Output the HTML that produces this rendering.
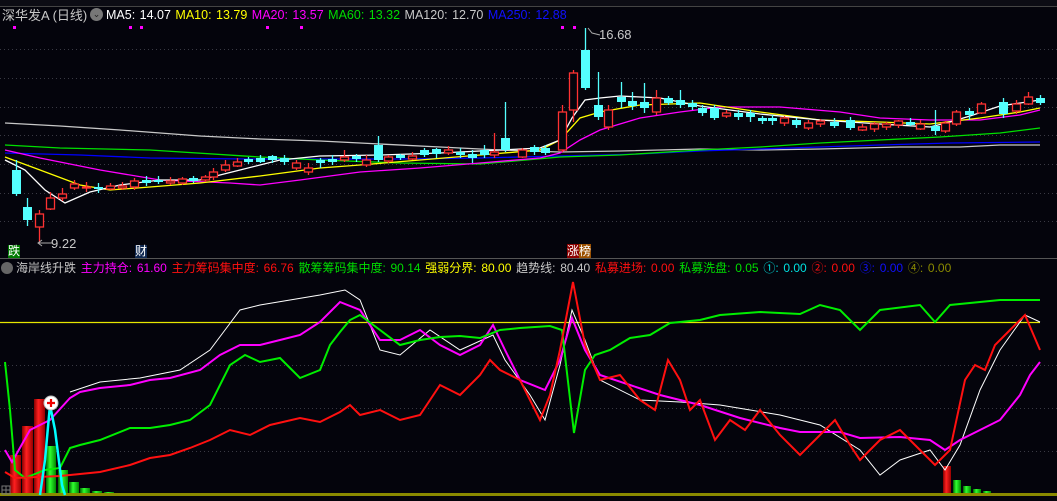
<!DOCTYPE html>
<html><head><meta charset="utf-8"><style>
html,body{margin:0;padding:0;background:#04040c;width:1057px;height:501px;overflow:hidden}
.t{position:absolute;font-family:"Liberation Sans","Noto Sans CJK SC",sans-serif;font-size:13px;white-space:nowrap;line-height:15px}
</style></head><body>
<svg width="1057" height="501" style="position:absolute;left:0;top:0" xmlns="http://www.w3.org/2000/svg">
<rect width="1057" height="501" fill="#04040c"/>
<rect x="0" y="0" width="1057" height="6" fill="#0c0c14"/>
<line x1="0" y1="6.5" x2="1057" y2="6.5" stroke="#444" />
<g stroke="#3a3a44" stroke-dasharray="1 3">
<line x1="0" y1="49.5" x2="1057" y2="49.5"/><line x1="0" y1="78.5" x2="1057" y2="78.5"/>
<line x1="0" y1="107.5" x2="1057" y2="107.5"/><line x1="0" y1="135.5" x2="1057" y2="135.5"/>
<line x1="0" y1="164.5" x2="1057" y2="164.5"/><line x1="0" y1="193.5" x2="1057" y2="193.5"/>
<line x1="0" y1="221.5" x2="1057" y2="221.5"/>
<line x1="0" y1="365.5" x2="1057" y2="365.5"/><line x1="0" y1="408.5" x2="1057" y2="408.5"/>
<line x1="0" y1="451.5" x2="1057" y2="451.5"/>
</g>
<line x1="0" y1="258.5" x2="1057" y2="258.5" stroke="#555"/>
<g fill="none" stroke-width="1.3">
<polyline stroke="#c8c8c8" points="5,123 60,126 120,130 200,136 260,139 320,141 380,144 440,147 500,150 560,152 620,151 700,149 760,150 820,149 900,147 960,147 1000,145 1040,145"/>
<polyline stroke="#0000ff" points="5,153 80,155 150,158 250,159 400,159 480,158 560,156 640,154 700,151 760,149 820,147 880,145 950,143 1040,142"/>
<polyline stroke="#00e000" points="5,145 60,148 150,150 260,157 320,160 400,163 480,164 560,157 620,155 700,150 760,147 820,143 880,140 940,137 1000,133 1040,128"/>
<polyline stroke="#ff00ff" points="5,150 40,158 100,170 160,180 230,183 260,185 300,180 360,172 420,168 480,163 540,158 560,153 580,140 600,130 640,118 680,112 720,107 780,107 840,112 880,118 930,120 980,120 1020,115 1040,110"/>
<polyline stroke="#ffff00" points="5,157 40,170 80,185 110,190 150,187 200,183 260,176 320,168 360,165 420,160 480,155 540,150 560,140 580,118 600,112 640,105 700,103 760,112 820,120 880,122 930,124 980,118 1020,112 1040,108"/>
<polyline stroke="#ffffff" points="5,160 25,170 45,190 65,203 90,192 120,185 160,180 200,180 240,170 280,160 320,156 380,155 440,153 500,150 540,148 560,140 572,118 585,100 600,98 620,96 660,98 700,106 760,114 820,120 880,124 930,127 950,122 970,116 1000,106 1040,100"/>
</g>
<g id="candles" stroke-width="1.3"></g>
<polyline points="588,28 592,33 600,35" fill="none" stroke="#aaa"/>
<line x1="38" y1="243" x2="52" y2="243" stroke="#aaa"/>
<polyline points="42,240 38,243 42,246" fill="none" stroke="#aaa"/>
<g fill="#ff00ff"><rect x="13" y="26" width="3" height="3"/><rect x="129" y="26" width="3" height="3"/><rect x="140" y="26" width="3" height="3"/><rect x="266" y="26" width="3" height="3"/><rect x="300" y="26" width="3" height="3"/>
<rect x="561" y="26" width="3" height="3"/><rect x="573" y="26" width="3" height="3"/></g>
<line x1="0" y1="322.5" x2="1040" y2="322.5" stroke="#e6e600" stroke-width="1.2"/>
<defs>
<linearGradient id="rg" x1="0" x2="1"><stop offset="0" stop-color="#800"/><stop offset=".4" stop-color="#ff2020"/><stop offset="1" stop-color="#900"/></linearGradient>
<linearGradient id="gg" x1="0" x2="1"><stop offset="0" stop-color="#060"/><stop offset=".4" stop-color="#30ff30"/><stop offset="1" stop-color="#080"/></linearGradient>
</defs>
<g fill="url(#rg)"><rect x="10" y="455" width="11" height="40"/><rect x="22" y="426" width="11" height="69"/><rect x="34" y="399" width="11" height="96"/><rect x="943" y="466" width="8" height="29"/></g>
<g fill="url(#gg)"><rect x="46" y="446" width="10" height="49"/><rect x="58" y="470" width="10" height="25"/><rect x="69" y="482" width="10" height="13"/><rect x="80" y="488" width="10" height="7"/><rect x="92" y="491" width="10" height="4"/><rect x="104" y="492" width="10" height="3"/><rect x="953" y="480" width="8" height="15"/><rect x="963" y="486" width="8" height="9"/><rect x="973" y="489" width="8" height="6"/><rect x="983" y="491" width="8" height="4"/></g>
<rect x="0" y="493" width="1057" height="3" fill="#8a8a00"/>
<g fill="none" stroke-width="2">
<polyline stroke="#ffffff" stroke-width="1" points="70,392 100,382 140,378 180,370 210,350 225,330 240,310 260,305 290,300 320,295 345,290 360,300 380,350 400,355 430,330 460,350 493,335 505,360 530,395 545,420 560,365 572,310 585,340 600,380 640,400 680,402 720,405 780,415 820,425 860,450 880,475 900,460 930,450 945,470 960,445 980,390 1000,350 1025,315 1040,322"/>
<polyline stroke="#ff00ff" points="5,450 12,462 30,430 50,420 70,398 80,392 100,388 130,385 150,380 170,378 200,370 220,355 240,345 260,345 280,340 300,335 320,322 340,302 360,310 380,340 400,340 420,330 440,345 460,355 480,345 493,325 505,350 520,380 545,390 560,360 572,318 585,350 600,375 630,385 660,395 700,405 740,418 780,428 800,432 840,432 860,438 900,437 930,440 945,450 960,440 980,430 1000,420 1020,395 1030,375 1040,362"/>
<polyline stroke="#00ee00" points="5,362 10,410 15,470 25,478 45,470 60,468 70,448 80,445 100,440 130,428 150,428 170,425 190,420 210,405 230,365 245,355 260,362 280,358 300,378 320,370 330,345 340,332 350,320 360,315 380,330 400,345 420,340 440,337 460,336 480,338 500,330 520,328 550,326 562,330 574,433 585,370 595,355 610,350 630,338 650,335 670,323 700,320 720,315 760,312 800,314 820,305 840,310 860,330 880,310 920,305 935,322 950,305 1000,300 1040,300"/>
<polyline stroke="#ff1010" points="5,472 15,478 60,476 100,472 130,465 150,458 170,455 190,448 210,440 230,430 250,435 270,425 300,418 320,422 340,412 350,405 360,415 380,410 400,420 420,415 440,385 460,395 480,375 490,360 500,370 520,380 540,420 550,395 560,350 573,282 585,345 600,380 620,375 640,400 655,410 668,360 680,380 690,410 700,400 715,440 730,420 745,430 760,410 780,435 800,455 815,440 835,420 850,445 860,460 880,440 900,430 920,450 935,465 950,450 965,380 975,365 985,370 995,345 1010,330 1025,315 1040,350"/>
<polyline stroke="#00ffff" stroke-width="2.5" points="40,495 45,460 50,405 55,430 62,485 65,495"/>
</g>
<circle cx="51" cy="403" r="7" fill="#fff" stroke="#bbb"/>
<path d="M47,403h8M51,399v8" stroke="#e00" stroke-width="2.2"/>
<g stroke="#777" fill="none"><path d="M2,486h8v8h-8zM6,486v8M2,490h8"/></g>
</svg>
<script>
var C=[[16,170,194,160,196,'c'],[27,207,220,198,226,'c'],[39,214,227,210,243,'r'],[50,198,209,192,210,'r'],[62,194,198,188,201,'r'],[74,184,188,180,190,'r'],[86,187,188,182,192,'r'],[98,187,189,183,193,'c'],[110,186,189,183,190,'r'],[122,186,188,182,190,'r'],[134,181,187,178,190,'r'],[146,180,183,176,186,'c'],[158,180,182,176,184,'c'],[170,181,183,177,185,'r'],[182,179,183,177,185,'r'],[193,178,181,176,183,'c'],[205,177,180,175,182,'r'],[213,172,177,168,180,'r'],[225,165,170,160,172,'r'],[237,162,166,158,167,'r'],[248,159,162,157,164,'c'],[260,158,162,155,163,'c'],[272,156,160,155,163,'c'],[284,158,162,155,165,'c'],[296,163,168,160,170,'r'],[308,168,172,163,175,'r'],[320,160,163,158,168,'c'],[332,159,162,155,165,'c'],[344,157,160,150,162,'r'],[356,156,159,154,162,'c'],[366,160,165,155,167,'r'],[378,145,160,136,162,'c'],[388,157,161,155,163,'r'],[400,155,158,154,160,'c'],[412,156,159,152,160,'r'],[424,150,155,148,157,'c'],[436,149,154,148,158,'c'],[448,150,153,146,155,'r'],[460,152,155,148,158,'c'],[472,154,158,150,163,'c'],[484,150,155,145,158,'c'],[494,152,155,133,158,'r'],[505,138,150,102,152,'c'],[522,150,157,148,158,'r'],[534,147,152,145,155,'c'],[545,148,153,145,155,'c'],[562,112,150,105,152,'r'],[573,73,110,70,122,'r'],[585,50,88,28,90,'c'],[598,105,117,72,120,'c'],[608,110,127,105,130,'r'],[621,97,102,82,108,'c'],[632,101,106,92,110,'c'],[644,102,108,83,113,'c'],[656,98,112,90,115,'r'],[668,98,103,96,105,'c'],[680,100,105,90,108,'c'],[692,103,107,100,110,'c'],[702,108,113,105,116,'c'],[714,108,118,105,120,'c'],[726,113,116,110,118,'r'],[738,113,117,110,120,'c'],[750,113,117,110,122,'c'],[762,118,121,116,124,'c'],[772,118,121,115,125,'c'],[784,118,123,116,126,'r'],[796,120,125,118,128,'c'],[808,123,128,120,130,'r'],[820,121,124,119,127,'r'],[834,122,126,118,128,'c'],[850,120,128,117,130,'c'],[862,127,130,124,131,'r'],[874,124,129,122,132,'r'],[886,124,127,122,130,'r'],[898,121,125,120,128,'r'],[910,122,125,118,126,'c'],[920,124,129,120,130,'r'],[935,126,131,110,135,'c'],[945,123,131,121,133,'r'],[956,112,124,110,126,'r'],[969,111,115,108,120,'c'],[981,104,113,102,114,'r'],[1003,102,114,98,118,'c'],[1016,104,111,100,114,'r'],[1028,97,104,92,105,'r'],[1040,98,103,95,105,'c']];
var g=document.getElementById('candles'),s='';
C.forEach(function(c){var x=c[0],col=c[5]=='c'?'#54ffff':'#ff3232';
s+='<line x1="'+(x+.5)+'" y1="'+c[3]+'" x2="'+(x+.5)+'" y2="'+c[4]+'" stroke="'+col+'"/>';
if(c[5]=='c')s+='<rect x="'+(x-4)+'" y="'+c[1]+'" width="9" height="'+Math.max(1,c[2]-c[1])+'" fill="'+col+'"/>';
else s+='<rect x="'+(x-3.5)+'" y="'+c[1]+'" width="8" height="'+Math.max(1,c[2]-c[1])+'" fill="#04040c" stroke="'+col+'"/>';});
g.innerHTML=s;
</script>
<div class="t" style="left:2px;top:8px;color:#c8c8c8">深华发A (日线)</div>
<div class="t" style="left:90px;top:8px;width:13px;height:13px;border-radius:7px;background:#777;color:#222;font-size:9px;text-align:center;line-height:13px">⌄</div>
<div class="t" style="left:106px;top:8px;font-size:12.5px;word-spacing:1px"><span style="color:#fff">MA5: 14.07</span> <span style="color:#ffff00">MA10: 13.79</span> <span style="color:#ff00ff">MA20: 13.57</span> <span style="color:#00dd00">MA60: 13.32</span> <span style="color:#c8c8c8">MA120: 12.70</span> <span style="color:#1010ff">MA250: 12.88</span></div>
<div class="t" style="left:599px;top:27px;color:#c8c8c8">16.68</div>
<div class="t" style="left:51px;top:236px;color:#c8c8c8">9.22</div>
<div class="t" style="left:8px;top:245px;background:#007a00;color:#fff;font-size:12px;line-height:13px">跌</div>
<div class="t" style="left:135px;top:245px;background:#102850;color:#fff;font-size:12px;line-height:13px">财</div>
<div class="t" style="left:567px;top:245px;font-size:12px;line-height:13px"><span style="background:#8a0000;color:#fff">涨</span><span style="background:#9a5000;color:#fff">榜</span></div>
<div class="t" style="left:1px;top:262px;width:12px;height:12px;border-radius:6px;background:#666"></div>
<div class="t" style="left:16px;top:261px;font-size:12px;word-spacing:1.4px"><span style="color:#c8c8c8">海岸线升跌</span> <span style="color:#ff00ff">主力持仓: 61.60</span> <span style="color:#ff1010">主力筹码集中度: 66.76</span> <span style="color:#00dd00">散筹筹码集中度: 90.14</span> <span style="color:#ffff00">强弱分界: 80.00</span> <span style="color:#c8c8c8">趋势线: 80.40</span> <span style="color:#ff1010">私募进场: 0.00</span> <span style="color:#00dd00">私募洗盘: 0.05</span> <span style="color:#00e0e0">①: 0.00</span> <span style="color:#ff1010">②: 0.00</span> <span style="color:#1010ff">③: 0.00</span> <span style="color:#8a8a00">④: 0.00</span></div>
</body></html>
